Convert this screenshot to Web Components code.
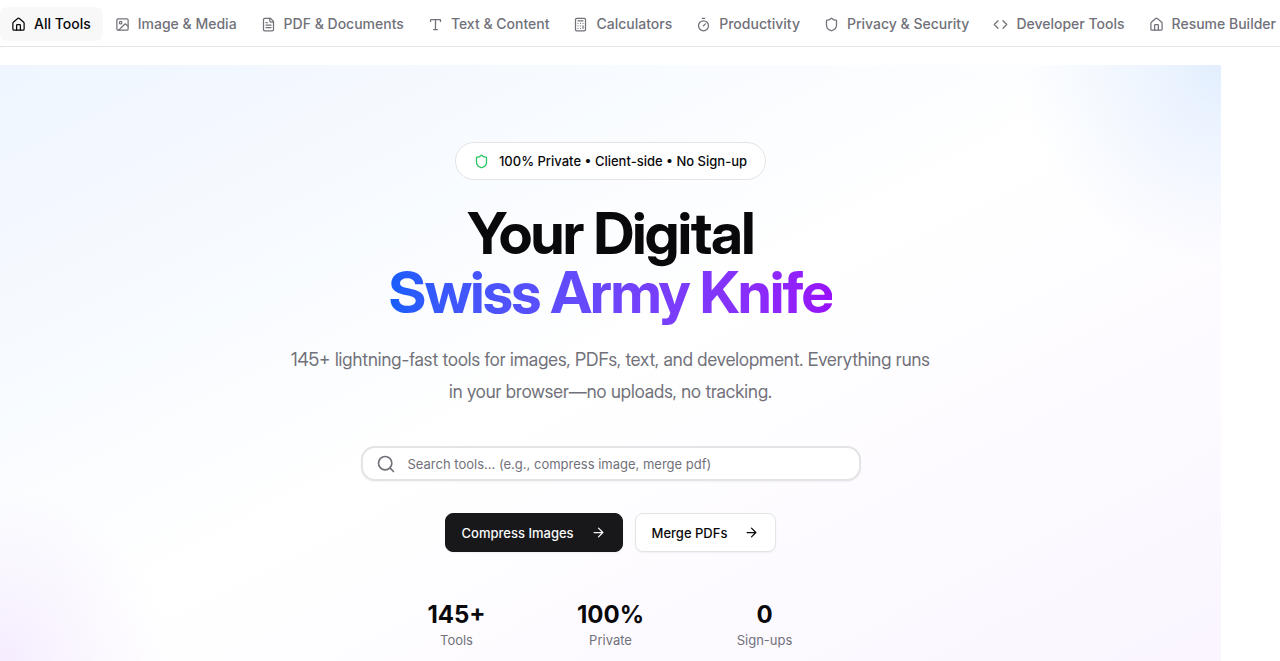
<!DOCTYPE html>
<html lang="en">
<head>
<meta charset="utf-8">
<meta name="viewport" content="width=device-width, initial-scale=1">
<title>Digital Swiss Army Knife</title>
<style>
  html, body { margin: 0; background: #fff; }
  body { display: flex; flex-direction: column; min-height: 100vh; font-family: Inter, "Liberation Sans", sans-serif; font-size: 13px; line-height: 20px; color: #09090b; overflow-x: hidden; }
  hero-section { flex: 1; }
</style>
</head>
<body>
<tool-nav>
  <nav-item icon="home" active>All Tools</nav-item>
  <nav-item icon="image">Image &amp; Media</nav-item>
  <nav-item icon="file">PDF &amp; Documents</nav-item>
  <nav-item icon="type">Text &amp; Content</nav-item>
  <nav-item icon="calc">Calculators</nav-item>
  <nav-item icon="timer">Productivity</nav-item>
  <nav-item icon="shield">Privacy &amp; Security</nav-item>
  <nav-item icon="code">Developer Tools</nav-item>
  <nav-item icon="home">Resume Builder</nav-item>
</tool-nav>
<hero-section>
  <trust-badge slot="badge">100% Private • Client-side • No Sign-up</trust-badge>
  <hero-title slot="title">Your Digital<span slot="accent">Swiss Army Knife</span></hero-title>
  <span slot="lead">145+ lightning-fast tools for images, PDFs, text, and development. Everything runs in your browser—no uploads, no tracking.</span>
  <search-box slot="search"></search-box>
  <action-button slot="actions" primary>Compress Images</action-button>
  <action-button slot="actions">Merge PDFs</action-button>
  <stat-item slot="stats" value="145+">Tools</stat-item>
  <stat-item slot="stats" value="100%">Private</stat-item>
  <stat-item slot="stats" value="0">Sign-ups</stat-item>
</hero-section>
<script>
const paths = {
  home: '<path d="M15 21v-8a1 1 0 0 0-1-1h-4a1 1 0 0 0-1 1v8"/><path d="M3 10a2 2 0 0 1 .709-1.528l7-6a2 2 0 0 1 2.582 0l7 6A2 2 0 0 1 21 10v9a2 2 0 0 1-2 2H5a2 2 0 0 1-2-2z"/>',
  image: '<path d="M3 15V5a2 2 0 0 1 2-2h14a2 2 0 0 1 2 2v14a2 2 0 0 1-2 2H5a2 2 0 0 1-2-2z"/><circle cx="9" cy="9" r="2"/><path d="m21 15-3.086-3.086a2 2 0 0 0-2.828 0L6 21"/>',
  file: '<path d="M15 2H6a2 2 0 0 0-2 2v16a2 2 0 0 0 2 2h12a2 2 0 0 0 2-2V7Z"/><path d="M14 2v4a2 2 0 0 0 2 2h4M10 9H8M16 13H8M16 17H8"/>',
  type: '<path d="M12 4v16M4 7V5a1 1 0 0 1 1-1h14a1 1 0 0 1 1 1v2M9 20h6"/>',
  calc: '<rect width="16" height="20" x="4" y="2" rx="2"/><path d="M8 6h8M16 14v4M16 10h.01M12 10h.01M8 10h.01M12 14h.01M8 14h.01M12 18h.01M8 18h.01"/>',
  timer: '<path d="M10 2h4M12 14l3-3"/><circle cx="12" cy="14" r="8"/>',
  shield: '<path d="M20 13c0 5-3.500 7.500-7.660 8.950a1 1 0 0 1-.670-.010C7.500 20.500 4 18 4 13V6a1 1 0 0 1 1-1c2 0 4.500-1.200 6.240-2.720a1.170 1.170 0 0 1 1.520 0C14.510 3.810 17 5 19 5a1 1 0 0 1 1 1z"/>',
  code: '<path d="m16 18 6-6-6-6M8 6l-6 6 6 6"/>',
  search: '<path d="m21 21-4.340-4.340"/><circle cx="11" cy="11" r="8"/>',
  arrow: '<path d="M5 12h14M12 5l7 7-7 7"/>'
};
const icon = (name, size = 15) =>
  `<svg width="${size}" height="${size}" viewBox="0 0 24 24" fill="none" stroke="currentColor" stroke-width="2" stroke-linecap="round" stroke-linejoin="round" aria-hidden="true">${paths[name]}</svg>`;

const define = (tag, render) => customElements.define(tag, class extends HTMLElement {
  connectedCallback() {
    if (this.shadowRoot) return;
    const template = document.createElement('template');
    template.innerHTML = render(this);
    this.attachShadow({ mode: 'open' }).append(template.content.cloneNode(true));
  }
});

define('tool-nav', () => `
  <style>
    :host { display: block; border-bottom: 1px solid #e4e4e7; background: #fff; }
    nav { display: flex; padding: 7px 0 5px; }
  </style>
  <nav aria-label="Tool categories"><slot></slot></nav>`);

define('nav-item', el => `
  <style>
    :host { display: block; flex: none; }
    a { display: flex; align-items: center; gap: 8px; padding: 7px 12px; border-radius: 8px; font-size: 14px; font-weight: 500; color: #71717a; text-decoration: none; white-space: nowrap; }
    :host([active]) a { padding-left: 11px; background: #f8f8f8; color: #09090b; }
    svg { flex: none; }
  </style>
  <a href="#"${el.hasAttribute('active') ? ' aria-current="page"' : ''}>${icon(el.getAttribute('icon'))}<slot></slot></a>`);

define('hero-section', () => `
  <style>
    :host { display: flex; margin: 18px 59px 0 0; }
    section {
      flex: 1; min-width: 0;
      display: flex; flex-direction: column; align-items: center; padding: 77px 24px 8px; text-align: center;
      background:
        radial-gradient(circle 200px at 100% 0, #dbeafecc, #dbeafe66 45%, #dbeafe00),
        radial-gradient(circle 170px at 0 100%, #f3e8ffcc, #f3e8ff66 45%, #f3e8ff00),
        linear-gradient(153deg, #eff6ff, #fff 50%, #faf5ff);
    }
    p { margin: 22px 0 0; max-width: 650px; font-family: "Inter Display", Inter, sans-serif; font-size: 18px; line-height: 32px; color: #71717a; }
    .search { width: 100%; max-width: 500px; margin-top: 38px; }
    .actions { display: flex; gap: 12px; margin-top: 32px; }
    .stats { display: grid; grid-template-columns: repeat(3, 1fr); gap: 32px; width: 100%; max-width: 430px; margin-top: 48px; }
  </style>
  <section>
    <slot name="badge"></slot>
    <slot name="title"></slot>
    <p><slot name="lead"></slot></p>
    <div class="search"><slot name="search"></slot></div>
    <div class="actions"><slot name="actions"></slot></div>
    <div class="stats"><slot name="stats"></slot></div>
  </section>`);

define('trust-badge', () => `
  <style>
    :host { display: flex; align-items: center; gap: 10px; padding: 8px 18px; border: 1px solid #e4e4e7; border-radius: 20px; background: #fff; font-weight: 500; white-space: nowrap; }
    svg { color: #22c55e; }
  </style>
  ${icon('shield')}<slot></slot>`);

define('hero-title', () => `
  <style>
    :host { display: block; margin-top: 24px; }
    h1 { margin: 0; font-family: "Inter Display", Inter, sans-serif; font-size: 58px; line-height: 59px; font-weight: 700; letter-spacing: -0.03em; }
    .accent { display: block; width: fit-content; margin: 0 auto -4px; padding-bottom: 4px; background: linear-gradient(90deg in oklab, #155dfc, #9810fa); -webkit-background-clip: text; background-clip: text; color: transparent; }
  </style>
  <h1><slot></slot><span class="accent"><slot name="accent"></slot></span></h1>`);

define('search-box', () => `
  <style>
    :host { display: block; }
    label { display: flex; align-items: center; gap: 12px; padding: 0 13px; height: 31px; border: 2px solid #e4e4e7; border-radius: 14px; background: #fff; box-shadow: 0 1px 2px #0000000d; color: #71717a; }
    svg { flex: none; }
    input { flex: 1; min-width: 0; border: 0; padding: 0; outline: 0; background: none; font: inherit; color: #09090b; }
    input::placeholder { color: #71717a; opacity: 1; }
  </style>
  <label>${icon('search', 20)}<input type="search" aria-label="Search tools" placeholder="Search tools... (e.g., compress image, merge pdf)"></label>`);

define('action-button', () => `
  <style>
    :host { display: block; }
    button { display: flex; align-items: center; gap: 17px; height: 39px; padding: 0 16px; border: 1px solid #e4e4e7; border-radius: 8px; background: #fff; box-shadow: 0 1px 2px #0000000d; font: inherit; font-weight: 500; color: #09090b; white-space: nowrap; }
    :host([primary]) button { background: #18181b; border-color: #18181b; color: #fafafa; }
  </style>
  <button type="button"><slot></slot>${icon('arrow')}</button>`);

define('stat-item', el => `
  <style>
    :host { display: block; }
    strong { display: block; font-size: 24px; line-height: 30px; font-weight: 700; }
    span { color: #71717a; }
  </style>
  <strong>${el.getAttribute('value')}</strong><span><slot></slot></span>`);
</script>
</body>
</html>
